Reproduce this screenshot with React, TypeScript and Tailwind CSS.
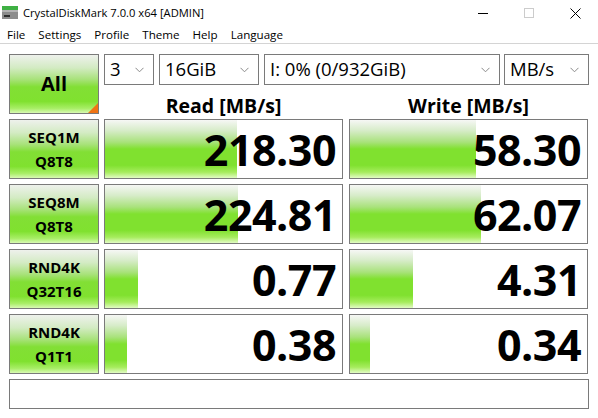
import React from "react";

const FONT = { fontFamily: '"Open Sans", "Noto Sans", "Liberation Sans", sans-serif' };

const barGradient =
  "bg-[linear-gradient(to_bottom,#f6f7f5_0%,#d7ecc9_18%,#a9e27c_38%,#80e12f_50%,#80e12f_78%,#a6ec5d_90%,#e2fbc4_100%)]";
const btnGradient =
  "bg-[linear-gradient(to_bottom,#eef1ec_0%,#d3ebc3_22%,#a8e27a_42%,#82df35_55%,#80e12f_80%,#a8ee66_92%,#d9f9b4_100%)]";

type Row = { l1: string; l2: string; read: string; write: string; rw: number; ww: number };

const rows: Row[] = [
  { l1: "SEQ1M", l2: "Q8T8", read: "218.30", write: "58.30", rw: 132, ww: 126 },
  { l1: "SEQ8M", l2: "Q8T8", read: "224.81", write: "62.07", rw: 133, ww: 131 },
  { l1: "RND4K", l2: "Q32T16", read: "0.77", write: "4.31", rw: 33, ww: 63 },
  { l1: "RND4K", l2: "Q1T1", read: "0.38", write: "0.34", rw: 22, ww: 20 },
];

function Chevron() {
  return (
    <svg width="9" height="6" viewBox="0 0 9 6" className="shrink-0">
      <path d="M0.5 0.8 L4.5 4.8 L8.5 0.8" fill="none" stroke="#8a8a8a" strokeWidth="1" />
    </svg>
  );
}

function Combo({ text, w }: { text: string; w: string }) {
  return (
    <div className={`${w} h-[31px] border border-[#7a7a7a] bg-white flex items-center justify-between pl-[5px] pr-[9px]`}>
      <span className="text-[18.5px] text-black leading-none">{text}</span>
      <Chevron />
    </div>
  );
}

function Meter({ value, fill }: { value: string; fill: number }) {
  return (
    <div className="relative w-[239px] h-[60px] border border-[#7a7a7a] bg-white">
      <div className={`absolute left-0 top-0 bottom-0 ${barGradient}`} style={{ width: fill }} />
      <div className="relative h-full flex items-center justify-end pr-[6px]">
        <span className="text-[43px] font-bold text-black leading-none tracking-[-0.5px]">{value}</span>
      </div>
    </div>
  );
}

function AppIcon() {
  return (
    <svg width="16" height="14" viewBox="0 0 16 14">
      <rect x="0" y="0" width="16" height="4" fill="#3fb043" />
      <rect x="0" y="4" width="16" height="9" fill="#8c8c8c" />
      <rect x="0" y="4" width="16" height="2" fill="#b4b4b4" />
      <rect x="2" y="9" width="6" height="2" fill="#2e2e2e" />
    </svg>
  );
}

export default function App() {
  return (
    <div className="w-[598px] h-[418px] bg-white overflow-hidden text-black" style={FONT}>
      {/* title bar */}
      <div className="h-[25px] flex items-center pt-[1px]">
        <div className="pl-[2px] pr-[5px] flex items-center">
          <AppIcon />
        </div>
        <span className="text-[11.2px] text-black">CrystalDiskMark 7.0.0 x64 [ADMIN]</span>
        <div className="ml-auto flex items-center h-full">
          <div className="w-[46px] h-full flex items-center justify-center">
            <div className="w-[10px] h-px bg-black" />
          </div>
          <div className="w-[46px] h-full flex items-center justify-center">
            <div className="w-[10px] h-[10px] border border-[#cccccc]" />
          </div>
          <div className="w-[46px] h-full flex items-center justify-center">
            <svg width="11" height="11" viewBox="0 0 11 11">
              <path d="M0.5 0.5 L10.5 10.5 M10.5 0.5 L0.5 10.5" stroke="#000" strokeWidth="1" />
            </svg>
          </div>
        </div>
      </div>

      {/* menu bar */}
      <div className="h-[19px] flex items-center gap-[13px] pl-[7px] pt-[2px] text-[11.6px] border-b border-[#d4d4d4]">
        <span>File</span>
        <span>Settings</span>
        <span>Profile</span>
        <span>Theme</span>
        <span>Help</span>
        <span>Language</span>
      </div>

      {/* main panel */}
      <div className="pl-[9px] pt-[10px] flex flex-col">
        <div className="flex">
          <div className={`relative w-[90px] h-[60px] border border-[#7a7a7a] ${btnGradient} flex items-center justify-center`}>
            <span className="text-[20px] font-bold leading-none">All</span>
            <div className="absolute right-0 bottom-0 w-0 h-0 border-l-[10px] border-l-transparent border-b-[10px] border-b-[#f07415]" />
          </div>
          <div className="ml-[5px] flex flex-col">
            <div className="flex">
              <Combo text="3" w="w-[50px]" />
              <div className="ml-[5px]">
                <Combo text="16GiB" w="w-[100px]" />
              </div>
              <div className="ml-[5px]">
                <Combo text="I: 0% (0/932GiB)" w="w-[236px]" />
              </div>
              <div className="ml-[4px]">
                <Combo text="MB/s" w="w-[85px]" />
              </div>
            </div>
            <div className="flex h-[34px] items-center">
              <div className="w-[239px] text-center text-[19.5px] font-bold leading-none pt-[8px]">Read [MB/s]</div>
              <div className="ml-[6px] w-[239px] text-center text-[19.5px] font-bold leading-none pt-[8px]">Write [MB/s]</div>
            </div>
          </div>
        </div>

        <div className="flex flex-col gap-[5px]">
          {rows.map((r, i) => (
            <div key={i} className="flex">
              <div className={`w-[90px] h-[60px] border border-[#7a7a7a] ${btnGradient} flex flex-col items-center justify-center gap-[4px]`}>
                <span className="text-[15px] font-bold leading-[20px]">{r.l1}</span>
                <span className="text-[15px] font-bold leading-[20px]">{r.l2}</span>
              </div>
              <div className="ml-[5px]">
                <Meter value={r.read} fill={r.rw} />
              </div>
              <div className="ml-[6px]">
                <Meter value={r.write} fill={r.ww} />
              </div>
            </div>
          ))}
        </div>

        <div className="mt-[5px] w-[580px] h-[30px] border border-[#7a7a7a] bg-white" />
      </div>
    </div>
  );
}
